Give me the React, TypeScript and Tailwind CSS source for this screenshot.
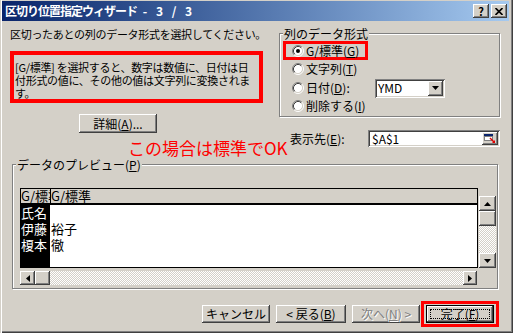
import React from 'react'

const bevel =
  'bg-[#d4d0c8] shadow-[inset_-1px_-1px_0_#404040,inset_1px_1px_0_#ffffff,inset_-2px_-2px_0_#808080]'
const sunken =
  'bg-white shadow-[inset_1px_1px_0_#808080,inset_-1px_-1px_0_#ffffff,inset_2px_2px_0_#404040,inset_-2px_-2px_0_#d4d0c8]'
const etched = 'border border-[#808080] shadow-[1px_1px_0_#ffffff,inset_1px_1px_0_#ffffff]'
const dither =
  'bg-[image:repeating-conic-gradient(#ffffff_0_25%,#d4d0c8_0_50%)] bg-[length:2px_2px]'

function Radio({ checked = false }: { checked?: boolean }) {
  return (
    <svg width="12" height="12" viewBox="0 0 12 12" className="shrink-0">
      <circle cx="6" cy="6" r="4.5" fill="#ffffff" />
      <path d="M9.89 2.11A5.5 5.5 0 0 0 2.11 9.89" stroke="#808080" fill="none" />
      <path d="M2.11 9.89A5.5 5.5 0 0 0 9.89 2.11" stroke="#ffffff" fill="none" />
      <path d="M9.18 2.82A4.5 4.5 0 0 0 2.82 9.18" stroke="#404040" fill="none" />
      <path d="M2.82 9.18A4.5 4.5 0 0 0 9.18 2.82" stroke="#d4d0c8" fill="none" />
      {checked && <circle cx="6" cy="6" r="2" fill="#000000" />}
    </svg>
  )
}

function Tri({ dir }: { dir: 'up' | 'down' | 'left' | 'right' }) {
  if (dir === 'up' || dir === 'down') {
    return (
      <svg width="7" height="4" viewBox="0 0 7 4">
        <polygon points={dir === 'up' ? '0,4 7,4 3.5,0' : '0,0 7,0 3.5,4'} fill="#000000" />
      </svg>
    )
  }
  return (
    <svg width="4" height="7" viewBox="0 0 4 7">
      <polygon points={dir === 'left' ? '4,0 4,7 0,3.5' : '0,0 0,7 4,3.5'} fill="#000000" />
    </svg>
  )
}

function Button({
  children,
  className = '',
  disabled = false,
  isDefault = false,
}: {
  children: React.ReactNode
  className?: string
  disabled?: boolean
  isDefault?: boolean
}) {
  return (
    <div
      className={`relative flex items-center justify-center whitespace-nowrap text-[12px] leading-[14px] ${bevel} ${
        isDefault ? 'border border-black' : ''
      } ${disabled ? 'text-[#808080] [text-shadow:1px_1px_0_#ffffff]' : 'text-black'} ${className}`}
    >
      {children}
      {isDefault && <div className="absolute inset-[3px] border border-dotted border-black" />}
    </div>
  )
}

function RangeIcon() {
  return (
    <div className={`flex h-[13px] w-[16px] items-center justify-center ${bevel}`}>
      <svg width="12" height="9" viewBox="0 0 12 9">
        <rect x="0" y="0" width="9" height="2" fill="#0a246a" />
        <rect x="0.5" y="2.5" width="8" height="4" fill="#ffffff" stroke="#808080" />
        <path d="M6 4L10 8" stroke="#e00000" strokeWidth="1.5" />
        <polygon points="11,9 11,6 8,9" fill="#e00000" />
      </svg>
    </div>
  )
}

export default function App() {
  return (
    <div className="h-[333px] w-[513px] overflow-hidden bg-[#d4d0c8] pb-[3px] pl-[2px] pr-[4px] pt-[1px] font-['Noto_Sans_CJK_JP',sans-serif] text-black shadow-[inset_1px_0_0_#d4d0c8,inset_2px_0_0_#ffffff,inset_-1px_-1px_0_#404040,inset_-2px_-2px_0_#808080]">
      {/* Title bar */}
      <div className="flex h-[20px] items-center bg-linear-to-r from-[#0a246a] to-[#a6caf0] pl-[3px] pr-[2px]">
        <span className="whitespace-nowrap text-[12px] font-bold leading-[14px] tracking-[-1px] text-white">
          区切り位置指定ウィザード<span className="tracking-[3px]"> - 3 / 3</span>
        </span>
        <div className="ml-auto flex gap-[2px]">
          <div className={`flex h-[14px] w-[16px] items-center justify-center text-[11px] font-bold leading-[12px] ${bevel}`}>
            ?
          </div>
          <div className={`flex h-[14px] w-[16px] items-center justify-center ${bevel}`}>
            <svg width="8" height="7" viewBox="0 0 8 7">
              <path d="M0.5 0L7.5 7M7.5 0L0.5 7" stroke="#000000" strokeWidth="1.6" />
            </svg>
          </div>
        </div>
      </div>

      {/* Body */}
      <div className="flex flex-col">
        <div className="flex items-start">
          {/* Left column */}
          <div className="ml-[8px] flex w-[253px] flex-col">
            <p className="mt-[6px] whitespace-nowrap text-[11px] leading-[14px] tracking-[-0.3px]">
              区切ったあとの列のデータ形式を選択してください。
            </p>
            <div className="mt-[10px] h-[52px] whitespace-nowrap border-4 border-[#ff0000] pl-[1px] pt-[6px] text-[11px] leading-[13px] tracking-[-0.3px]">
              [G/標準] を選択すると、数字は数値に、日付は日
              <br />
              付形式の値に、その他の値は文字列に変換されま
              <br />
              す。
            </div>
            <Button className="ml-[69px] mt-[11px] h-[19px] w-[78px]">
              詳細(<span className="underline">A</span>)...
            </Button>
            <p className="ml-[118px] mt-[6px] whitespace-nowrap text-[17px] leading-[18px] text-[#ff0000]">
              この場合は標準でOK
            </p>
          </div>

          {/* Right column */}
          <div className="ml-[16px] flex w-[221px] flex-col">
            <div className={`mt-[12px] h-[84px] ${etched}`}>
              <div className="-mt-[7px] ml-[3px] w-fit bg-[#d4d0c8] px-[1px] text-[12px] leading-[14px]">
                列のデータ形式
              </div>
              <div className="ml-[3px] flex h-[19px] w-[85px] items-center border-[3px] border-[#ff0000] pl-[6px]">
                <Radio checked />
                <span className="ml-[2px] whitespace-nowrap text-[12px] leading-[13px]">
                  G/標準(<span className="underline">G</span>)
                </span>
              </div>
              <div className="ml-[12px] flex h-[18px] items-center">
                <Radio />
                <span className="ml-[2px] whitespace-nowrap text-[12px] leading-[14px]">
                  文字列(<span className="underline">T</span>)
                </span>
              </div>
              <div className="ml-[12px] flex h-[20px] items-center">
                <Radio />
                <span className="ml-[2px] w-[69px] whitespace-nowrap text-[12px] leading-[14px]">
                  日付(<span className="underline">D</span>):
                </span>
                <div className={`flex h-[19px] w-[70px] items-center pl-[3px] pr-[2px] ${sunken}`}>
                  <span className="text-[12px] leading-[14px]">YMD</span>
                  <div className={`ml-auto flex h-[15px] w-[15px] items-center justify-center ${bevel}`}>
                    <Tri dir="down" />
                  </div>
                </div>
              </div>
              <div className="ml-[12px] flex h-[16px] items-center">
                <Radio />
                <span className="ml-[2px] whitespace-nowrap text-[12px] leading-[14px]">
                  削除する(<span className="underline">I</span>)
                </span>
              </div>
            </div>

            <div className="mt-[13px] flex h-[17px] items-center">
              <span className="ml-[11px] whitespace-nowrap text-[12px] leading-[14px]">
                表示先(<span className="underline">E</span>):
              </span>
              <div className={`ml-auto flex h-[17px] w-[132px] items-center pl-[4px] pr-[2px] ${sunken}`}>
                <span className="text-[12px] leading-[14px]">$A$1</span>
                <div className="ml-auto">
                  <RangeIcon />
                </div>
              </div>
            </div>
          </div>
        </div>

        {/* Preview */}
        <div className={`ml-[10px] mt-[7px] h-[125px] w-[486px] ${etched}`}>
          <div className="-mt-[7px] ml-[3px] w-fit bg-[#d4d0c8] px-[1px] text-[12px] leading-[14px]">
            データのプレビュー(<span className="underline">P</span>)
          </div>
          <div className="ml-[7px] mt-[16px] flex items-start">
            <div className="flex h-[80px] w-[458px] flex-col border border-black bg-white">
              <div className="flex h-[16px] border-b-2 border-black bg-[#d4d0c8] text-[13px] leading-[14px]">
                <div className="w-[29px] overflow-hidden whitespace-nowrap">G/標準</div>
                <div className="whitespace-nowrap border-l border-black">G/標準</div>
              </div>
              <div className="flex flex-1 text-[13px] leading-[16px]">
                <div className="w-[29px] whitespace-nowrap bg-black text-white">
                  氏名
                  <br />
                  伊藤
                  <br />
                  榎本
                </div>
                <div className="whitespace-nowrap pl-[1px]">
                  &nbsp;
                  <br />
                  裕子
                  <br />
                  徹
                </div>
              </div>
            </div>
            <div className={`ml-[1px] mt-[8px] flex h-[72px] w-[17px] flex-col ${dither}`}>
              <div className={`flex h-[15px] items-center justify-center ${bevel}`}>
                <Tri dir="up" />
              </div>
              <div className={`h-[15px] ${bevel}`} />
              <div className="flex-1" />
              <div className={`flex h-[15px] items-center justify-center ${bevel}`}>
                <Tri dir="down" />
              </div>
            </div>
          </div>
          <div className={`ml-[7px] mt-[3px] flex h-[14px] w-[457px] ${dither}`}>
            <div className={`flex w-[15px] items-center justify-center ${bevel}`}>
              <Tri dir="left" />
            </div>
            <div className={`w-[15px] ${bevel}`} />
            <div className="flex-1" />
            <div className={`flex w-[14px] items-center justify-center ${bevel}`}>
              <Tri dir="right" />
            </div>
          </div>
        </div>

        {/* Buttons */}
        <div className="mt-[12px] flex items-center justify-end pr-[10px]">
          <Button className="h-[18px] w-[68px]">キャンセル</Button>
          <Button className="ml-[6px] h-[18px] w-[70px]">
            &lt; 戻る(<span className="underline">B</span>)
          </Button>
          <Button className="ml-[6px] h-[18px] w-[68px]" disabled>
            次へ(<span className="underline">N</span>) &gt;
          </Button>
          <div className="ml-[1px] flex h-[26px] border-[3px] border-[#ff0000] px-[2px] py-[1px]">
            <Button className="h-[18px] w-[68px]" isDefault>
              完了(<span className="underline">F</span>)
            </Button>
          </div>
        </div>
      </div>
    </div>
  )
}
